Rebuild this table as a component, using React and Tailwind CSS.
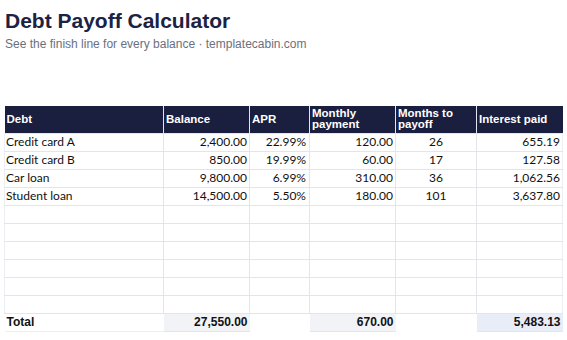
import React from "react";

const rows = [
  ["Credit card A", "2,400.00", "22.99%", "120.00", "26", "655.19"],
  ["Credit card B", "850.00", "19.99%", "60.00", "17", "127.58"],
  ["Car loan", "9,800.00", "6.99%", "310.00", "36", "1,062.56"],
  ["Student loan", "14,500.00", "5.50%", "180.00", "101", "3,637.80"],
  ["", "", "", "", "", ""],
  ["", "", "", "", "", ""],
  ["", "", "", "", "", ""],
  ["", "", "", "", "", ""],
  ["", "", "", "", "", ""],
  ["", "", "", "", "", ""],
];

const widths = ["w-[159px]", "w-[86px]", "w-[60px]", "w-[86px]", "w-[81px]", "w-[86px]"];

export default function App() {
  return (
    <div className="w-[567px] h-[340px] bg-white overflow-hidden">
      <div className="pl-[5px] pt-[8px]">
        <h1 className="text-[21px] leading-[26px] font-bold text-[#1c2244] font-['Liberation_Sans',Arial,sans-serif]">
          Debt Payoff Calculator
        </h1>
        <p className="mt-[3px] text-[12px] leading-[14px] text-[#6b7080] font-['Liberation_Sans',Arial,sans-serif]">
          See the finish line for every balance · templatecabin.com
        </p>
      </div>
      <table className="ml-[4px] mt-[55px] border-collapse table-fixed w-[558px]">
        <colgroup>
          {widths.map((w, i) => (
            <col key={i} className={w} />
          ))}
        </colgroup>
        <thead>
          <tr className="h-[27px] bg-[#1a1e3f] text-white font-['Liberation_Sans',Arial,sans-serif] text-[11.5px] leading-[11px] font-bold">
            <th className="text-left align-middle px-[2px] border-r border-[#e3e5ec] pt-[1px]">Debt</th>
            <th className="text-left align-middle px-[2px] border-r border-[#e3e5ec] pt-[1px]">Balance</th>
            <th className="text-left align-middle px-[2px] border-r border-[#e3e5ec] pt-[1px]">APR</th>
            <th className="text-left align-middle px-[2px] border-r border-[#e3e5ec]">Monthly<br />payment</th>
            <th className="text-left align-middle px-[2px] border-r border-[#e3e5ec]">Months to<br />payoff</th>
            <th className="text-left align-middle px-[2px] pt-[1px]">Interest paid</th>
          </tr>
        </thead>
        <tbody className="font-['Lato',sans-serif] text-[12px] leading-[14px] text-[#111111]">
          {rows.map((r, i) => (
            <tr key={i} className="h-[18px]">
              <td className="px-[1px] text-left border border-[#e3e5ec] border-l-[#eceef3] whitespace-nowrap">{r[0]}</td>
              <td className="px-[2px] text-right border border-[#e3e5ec]">{r[1]}</td>
              <td className="px-[3px] text-right border border-[#e3e5ec]">{r[2]}</td>
              <td className="px-[2px] text-right border border-[#e3e5ec]">{r[3]}</td>
              <td className="px-[2px] text-center border border-[#e3e5ec]">{r[4]}</td>
              <td className="px-[2px] text-right border border-[#e3e5ec] border-r-[#eceef3]">{r[5]}</td>
            </tr>
          ))}
          <tr className="h-[18px] font-['Liberation_Sans',Arial,sans-serif] font-bold text-[12px] text-[#111111]">
            <td className="px-[2px] text-left border-b border-[#eceef3]">Total</td>
            <td className="px-[2px] text-right bg-[#f2f3f6] border-b border-[#e3e5ec]">27,550.00</td>
            <td className="border-b border-white"></td>
            <td className="px-[2px] text-right bg-[#f2f3f6] border-b border-[#e3e5ec]">670.00</td>
            <td className="border-b border-white"></td>
            <td className="px-[2px] text-right bg-[#e8edf7] border-b border-[#e3e5ec]">5,483.13</td>
          </tr>
        </tbody>
      </table>
    </div>
  );
}
